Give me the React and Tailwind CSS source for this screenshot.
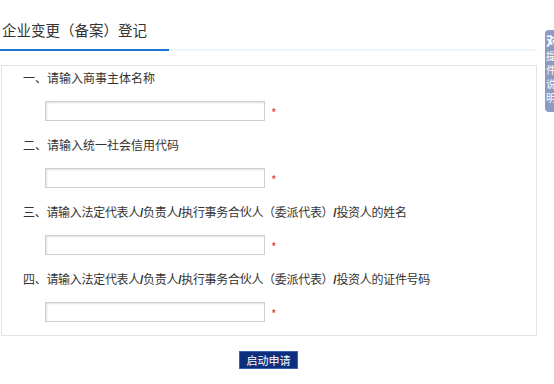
import React from 'react';

const font = { fontFamily: '"Noto Sans CJK SC", "Noto Sans", sans-serif' };

const fields = [
  '一、请输入商事主体名称',
  '二、请输入统一社会信用代码',
  '三、请输入法定代表人/负责人/执行事务合伙人（委派代表）/投资人的姓名',
  '四、请输入法定代表人/负责人/执行事务合伙人（委派代表）/投资人的证件号码',
];

// slashes in the reference are narrow and bold
function Label({ text }) {
  const parts = text.split('/');
  return parts.map((p, i) => (
    <React.Fragment key={i}>
      {i > 0 && <span className="font-bold" style={{ fontFamily: '"Liberation Sans", sans-serif' }}>/</span>}
      {p}
    </React.Fragment>
  ));
}

function Field({ label, first }) {
  const long = label.includes('/');
  return (
    <div className={first ? '' : 'mt-[12px]'}>
      <div className={`h-[24px] leading-[24px] text-[12px] text-[#333] pl-[21px] whitespace-nowrap ${long ? 'tracking-[-0.3px]' : ''}`}>
        <Label text={label} />
      </div>
      <div className="mt-[11px] flex items-start pl-[43px]">
        <input
          type="text"
          className="w-[220px] h-[20px] border border-[#cfcfcf] bg-white shadow-[inset_1px_1px_2px_rgba(0,0,0,0.12)] outline-none"
        />
        <span className="ml-[6px] mt-[4px] text-[12px] leading-[16px] text-[#e4393c]">*</span>
      </div>
    </div>
  );
}

export default function App() {
  return (
    <div className="relative w-[554px] h-[384px] bg-white overflow-hidden" style={font}>
      <div className="w-[537px]">
        <div className="pt-[20px] pb-[9px] pl-[2px] text-[14.5px] leading-[20px] text-[#333]">
          企业变更（备案）登记
        </div>
        <div className="flex h-[2px]">
          <div className="w-[169px] bg-[#1b76d2]"></div>
          <div className="flex-1 bg-[#eef5fc]"></div>
        </div>
        <div className="mt-[14px] ml-[1px] border border-[#e3e3e3] pb-[13px]">
          {fields.map((f, i) => (
            <Field key={i} label={f} first={i === 0} />
          ))}
        </div>
        <div className="mt-[15px] flex justify-center">
          <button className="w-[59px] h-[18px] bg-[#0c2f7e] border border-[#3d62ad] text-white text-[11px] leading-[16px]">
            启动申请
          </button>
        </div>
      </div>

      {/* side tab, cut off by the window edge */}
      <div className="absolute left-[545px] top-[30px] w-[12px] h-[82px] bg-[#8b9cc3] rounded-l-[4px] overflow-hidden flex flex-col items-start pl-[1px] text-white">
        <span className="text-[13px] leading-[17px] font-bold mt-[1px]">对</span>
        <span className="text-[10px] leading-[14px] mt-[1px]">提</span>
        <span className="text-[10px] leading-[14px]">件</span>
        <span className="text-[10px] leading-[14px]">说</span>
        <span className="text-[10px] leading-[14px]">明</span>
      </div>
    </div>
  );
}
